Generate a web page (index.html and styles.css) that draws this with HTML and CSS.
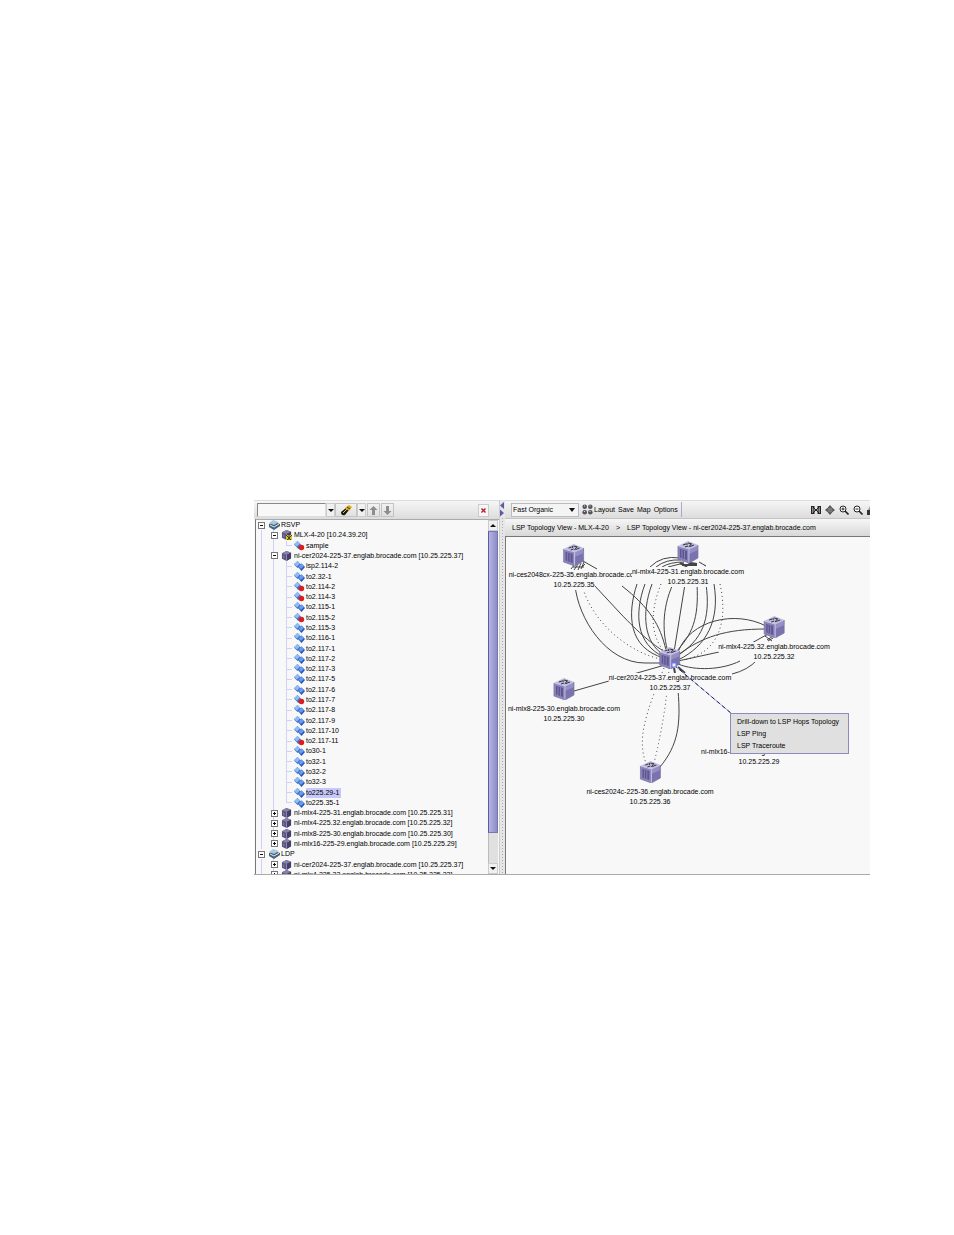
FILE: index.html
```html
<!DOCTYPE html>
<html lang="en">
<head>
    <meta charset="utf-8">
    <title>LSP Topology View</title>
    <link rel="stylesheet" href="styles.css">
</head>
<body>
    <svg class="defs" aria-hidden="true">
        <symbol id="router" viewBox="0 0 22 22">
            <path d="M1 5 L11 0 L21 4 L12 8 Z" fill="#bfbcdc"/>
            <path d="M1 5 L12 8 L12 22 L1 18 Z" fill="#8a84bd"/>
            <path d="M12 8 L21 4 L21 17 L12 22 Z" fill="#7a73ae"/>
            <path d="M12 8 L21 4 L21 9 L12 13 Z" fill="#958fc6"/>
            <path d="M1 5 L12 8 L21 4 M12 8 V22" fill="none" stroke="#cfccec" stroke-width=".8"/>
            <path d="M1 5 V18 L12 22 L21 17 V4" fill="none" stroke="#77719f" stroke-width=".7"/>
            <path d="M3 8 L10 10 V19 L3 16.500 Z" fill="#5d568f"/>
            <path d="M5 9 V17 M7.500 9.500 V18" stroke="#8f89c0" stroke-width=".8"/>
            <path d="M6 4 L9 3 M11 2 L15 3 M8 6 L11 5 M13 5.500 L17 4 M10 2 V4 M14 3 L12 6" stroke="#35323f"/>
        </symbol>
        <symbol id="box" viewBox="0 0 12 11">
            <path d="M1 2.5 L6 0 L11 2 L11 8 L6 11 L1 8.5 Z" fill="#5b5480"/>
            <path d="M1 2.5 L6 0 L11 2 L6 4.5 Z" fill="#8780a8"/>
            <path d="M6 4.5 L11 2 V8 L6 11 Z" fill="#453e68"/>
            <path d="M6 4.5 V11" stroke="#b3aecf" stroke-width=".7"/>
            <path d="M3 5 V8" stroke="#8f88b4"/>
        </symbol>
        <symbol id="stack" viewBox="0 0 11 10">
            <path d="M0 4 L6 2 L11 4 V6 L5 10 L0 7 Z" fill="#46617a"/>
            <path d="M0 3 L4 0 L10 2 L5 5 Z" fill="#a9c8de"/>
            <path d="M1 5 L5 7 L10 4" fill="none" stroke="#dcebf5"/>
        </symbol>
        <symbol id="link" viewBox="0 0 11 10">
            <path d="M0 3.500 L3.500 0 L7 3.500 L3.500 7 Z" fill="#3f70c8"/>
            <path d="M0 3 L3.500 0 L6 2.500 L3 5.500 Z" fill="#8fbcf2"/>
            <path d="M4 6 L7.500 2.500 L11 6 L7.500 10 Z" fill="#2453bb"/>
            <path d="M4.500 5.500 L7.500 2.500 L10 5 L7 8 Z" fill="#6a9ceb"/>
        </symbol>
        <symbol id="link-down" viewBox="0 0 11 10">
            <path d="M0 3.500 L3.500 0 L7 3.500 L3.500 7 Z" fill="#3f70c8"/>
            <path d="M0 3 L3.500 0 L6 2.500 L3 5.500 Z" fill="#8fbcf2"/>
            <path d="M3 7 L5 5 L7 9 Z" fill="#2f62c8"/>
            <circle cx="7.500" cy="6.500" r="2.700" fill="#dd1c1c"/>
        </symbol>
    </svg>

    <main class="viewer">
        <section class="sidebar">
            <div class="toolbar">
                <input class="search" type="text" aria-label="Search">
                <button class="arrow" aria-label="Search history"></button>
                <button class="find" aria-label="Find">
                    <svg width="12" height="11" viewBox="0 0 12 11"><path d="M1 7 L6 3 L9 5 L5 10 Q1 11 1 7" fill="#1d1a12"/><path d="M5 3 L9 0 L12 2 L9 6 Z" fill="#d6a91c"/><path d="M3 8 L7 4" stroke="#e6c23c"/><path d="M7 2 L10 4" stroke="#3d3410"/></svg>
                </button>
                <button class="arrow" aria-label="Find options"></button>
                <button class="step" aria-label="Previous">
                    <svg width="9" height="9" viewBox="0 0 9 9"><path d="M4.5 0 L8.5 4 H6 V9 H3 V4 H.5 Z" fill="#8d8d8d"/></svg>
                </button>
                <button class="step" aria-label="Next">
                    <svg width="9" height="9" viewBox="0 0 9 9"><path d="M4.5 9 L8.5 5 H6 V0 H3 V5 H.5 Z" fill="#8d8d8d"/></svg>
                </button>
                <button class="close" aria-label="Close">
                    <svg width="5" height="5" viewBox="0 0 5 5"><path d="M.5 .5 L4.5 4.5 M4.5 .5 L.5 4.5" stroke="#b3202c" stroke-width="1.4"/></svg>
                </button>
            </div>
            <div class="tree-pane">
                <ul class="tree">
                    <li class="root"><button class="toggle open" aria-label="Collapse"></button><svg class="icon"><use href="#stack"/></svg><span>RSVP</span></li>
                    <li class="device"><button class="toggle open" aria-label="Collapse"></button><svg class="icon"><use href="#box"/><path d="M5 5 H11 V11 H5 Z" fill="#d8c81e"/><path d="M5 5 L11 11 M11 5 L5 11 M8 5 V11" stroke="#4a4312"/></svg><span>MLX-4-20 [10.24.39.20]</span></li>
                    <li class="path last"><svg class="icon"><use href="#link-down"/></svg><span>sample</span></li>
                    <li class="device"><button class="toggle open" aria-label="Collapse"></button><svg class="icon"><use href="#box"/></svg><span>ni-cer2024-225-37.englab.brocade.com [10.25.225.37]</span></li>
                    <li class="path"><svg class="icon"><use href="#link"/></svg><span>lsp2.114-2</span></li>
                    <li class="path"><svg class="icon"><use href="#link"/></svg><span>to2.32-1</span></li>
                    <li class="path"><svg class="icon"><use href="#link-down"/></svg><span>to2.114-2</span></li>
                    <li class="path"><svg class="icon"><use href="#link-down"/></svg><span>to2.114-3</span></li>
                    <li class="path"><svg class="icon"><use href="#link"/></svg><span>to2.115-1</span></li>
                    <li class="path"><svg class="icon"><use href="#link-down"/></svg><span>to2.115-2</span></li>
                    <li class="path"><svg class="icon"><use href="#link"/></svg><span>to2.115-3</span></li>
                    <li class="path"><svg class="icon"><use href="#link"/></svg><span>to2.116-1</span></li>
                    <li class="path"><svg class="icon"><use href="#link"/></svg><span>to2.117-1</span></li>
                    <li class="path"><svg class="icon"><use href="#link"/></svg><span>to2.117-2</span></li>
                    <li class="path"><svg class="icon"><use href="#link"/></svg><span>to2.117-3</span></li>
                    <li class="path"><svg class="icon"><use href="#link"/></svg><span>to2.117-5</span></li>
                    <li class="path"><svg class="icon"><use href="#link"/></svg><span>to2.117-6</span></li>
                    <li class="path"><svg class="icon"><use href="#link-down"/></svg><span>to2.117-7</span></li>
                    <li class="path"><svg class="icon"><use href="#link"/></svg><span>to2.117-8</span></li>
                    <li class="path"><svg class="icon"><use href="#link"/></svg><span>to2.117-9</span></li>
                    <li class="path"><svg class="icon"><use href="#link"/></svg><span>to2.117-10</span></li>
                    <li class="path"><svg class="icon"><use href="#link-down"/></svg><span>to2.117-11</span></li>
                    <li class="path"><svg class="icon"><use href="#link"/></svg><span>to30-1</span></li>
                    <li class="path"><svg class="icon"><use href="#link"/></svg><span>to32-1</span></li>
                    <li class="path"><svg class="icon"><use href="#link"/></svg><span>to32-2</span></li>
                    <li class="path"><svg class="icon"><use href="#link"/></svg><span>to32-3</span></li>
                    <li class="path"><svg class="icon"><use href="#link"/></svg><span class="selected">to225.29-1</span></li>
                    <li class="path last"><svg class="icon"><use href="#link"/></svg><span>to225.35-1</span></li>
                    <li class="device"><button class="toggle" aria-label="Expand"></button><svg class="icon"><use href="#box"/></svg><span>ni-mlx4-225-31.englab.brocade.com [10.25.225.31]</span></li>
                    <li class="device"><button class="toggle" aria-label="Expand"></button><svg class="icon"><use href="#box"/></svg><span>ni-mlx4-225.32.englab.brocade.com [10.25.225.32]</span></li>
                    <li class="device"><button class="toggle" aria-label="Expand"></button><svg class="icon"><use href="#box"/></svg><span>ni-mlx8-225-30.englab.brocade.com [10.25.225.30]</span></li>
                    <li class="device last"><button class="toggle" aria-label="Expand"></button><svg class="icon"><use href="#box"/></svg><span>ni-mlx16-225-29.englab.brocade.com [10.25.225.29]</span></li>
                    <li class="root"><button class="toggle open" aria-label="Collapse"></button><svg class="icon"><use href="#stack"/></svg><span>LDP</span></li>
                    <li class="device"><button class="toggle" aria-label="Expand"></button><svg class="icon"><use href="#box"/></svg><span>ni-cer2024-225-37.englab.brocade.com [10.25.225.37]</span></li>
                    <li class="device"><button class="toggle" aria-label="Expand"></button><svg class="icon"><use href="#box"/></svg><span>ni-mlx4-225.32.englab.brocade.com [10.25.225.32]</span></li>
                </ul>
                <div class="scrollbar">
                    <button class="arrow up" aria-label="Scroll up"></button>
                    <div class="thumb"></div>
                    <div class="track"></div>
                    <button class="arrow" aria-label="Scroll down"></button>
                </div>
            </div>
        </section>

        <div class="splitter">
            <svg width="5" height="18" viewBox="0 0 5 18"><path d="M4 2 V9 L0 5.500 Z M0 9.500 V16.500 L4 13 Z" fill="#5a5aa8"/></svg>
        </div>

        <section class="topology">
            <div class="toolbar map-tools">
                <span class="combo">
                    <select aria-label="Layout type">
                        <option>Fast Organic</option>
                    </select>
                </span>
                <button class="text-button">
                    <svg width="11" height="11" viewBox="0 0 11 11"><g fill="#55555c"><circle cx="2.7" cy="2.7" r="2.3"/><circle cx="8.3" cy="2.7" r="2.3"/><circle cx="2.7" cy="8.3" r="2.3"/><circle cx="8.3" cy="8.3" r="2.3"/></g><path d="M2 2 H3 M7.500 2 H8.500 M2 7.500 H3 M7.500 7.500 H8.500" stroke="#d8d8dc"/></svg>Layout</button>
                <button class="text-button">Save</button>
                <button class="text-button">Map</button>
                <button class="text-button">Options</button>
                <span class="divider"></span>
                <div class="zoom-tools">
                    <button aria-label="Fit in view"><svg width="10" height="10" viewBox="0 0 10 10"><path d="M0 1 H3 V9 H0 Z M7 1 H10 V9 H7 Z" fill="#888"/><path d="M.5 1 V9 M9.500 1 V9 M3 1 V9 M7 1 V9 M0 1.500 H3 M7 1.500 H10 M0 8.500 H3 M7 8.500 H10 M2 2 L8 8 M8 2 L2 8" fill="none" stroke="#222"/></svg></button>
                    <button aria-label="Pan"><svg width="10" height="10" viewBox="0 0 10 10"><path d="M5 0 L7.500 3 H2.500 Z M5 10 L2.500 7 H7.500 Z M0 5 L3 2.500 V7.500 Z M10 5 L7 7.500 V2.500 Z" fill="#555"/><circle cx="5" cy="5" r="2.500" fill="#777"/></svg></button>
                    <button aria-label="Zoom in"><svg width="10" height="10" viewBox="0 0 10 10"><circle cx="4" cy="4" r="3" fill="#fff" stroke="#222"/><path d="M2.500 4 H5.500 M4 2.500 V5.500" stroke="#222"/><path d="M6 6 L9.500 9.500" stroke="#222" stroke-width="1.600"/></svg></button>
                    <button aria-label="Zoom out"><svg width="10" height="10" viewBox="0 0 10 10"><circle cx="4" cy="4" r="3" fill="#fff" stroke="#222"/><path d="M2.500 4 H5.500" stroke="#222"/><path d="M6 6 L9.500 9.500" stroke="#222" stroke-width="1.600"/></svg></button>
                    <button class="cut" aria-label="Export"><svg width="10" height="10" viewBox="0 0 10 10"><path d="M0 5 H10 V10 H0 Z" fill="#333"/><path d="M1 5 L3 1 H9 V5" fill="#999"/></svg></button>
                </div>
            </div>
            <nav class="crumbs">
                <a href="#">LSP Topology View - MLX-4-20</a>
                <span>&gt;</span>
                <a href="#">LSP Topology View - ni-cer2024-225-37.englab.brocade.com</a>
            </nav>
            <div class="map">
                <svg class="links" width="364" height="337" viewBox="506 537 364 337">
                    <g class="solid">
                        <!-- ces2048cx-225-35 -->
                        <path d="M575 585 C578 618 606 663 645 663 H664"/>
                        <path d="M594 585 L620 613 C640 634 652 644 665 652"/>
                        <path d="M583 561 L597 569 M622 586 C650 608 660 625 666 650"/>
                        <path d="M571 569 L575 564 M574 570 L578 564 M578 570 L581 563 M581 569 L584 562 M573 567 H584 M585 564 L582 567"/>
                        <!-- mlx4-225-31 -->
                        <path d="M637 584 C627 614 628 648 664 658"/>
                        <path d="M645 584 C634 614 636 644 664 657"/>
                        <path d="M652 584 C641 614 644 643 664 655"/>
                        <path d="M673 584 C661 610 663 635 668 652"/>
                        <path d="M685 584 L674 652"/>
                        <path d="M697 584 C699 620 692 634 676 652"/>
                        <path d="M706 584 C711 620 702 640 677 656"/>
                        <path d="M714 584 C720 620 707 646 678 660"/>
                        <path d="M650 567 Q662 555 680 558 M656 567 Q666 559 681 560 M662 567 Q670 562 684 562 M668 567 L684 563 M699 562 L706 566"/>
                        <path class="heavy" d="M680 563 L686 566 L691 563 L697 564 M682 565 H697"/>
                        <!-- mlx4-225.32 -->
                        <path d="M678 652 C690 620 735 610 766 626"/>
                        <path d="M678 655 C702 637 725 629 766 629"/>
                        <path d="M678 661 L719 652 M750 644 L768 634"/>
                        <path d="M678 664 C695 671 722 670 740 661"/>
                        <path d="M732 674 Q748 670 757 660"/>
                        <path d="M765 636 L772 641 M767 640 L773 636 M768 641 L773 638"/>
                        <!-- mlx8-225-30 and ces2024c-225-36 -->
                        <path d="M574 691 L665 665"/>
                        <path d="M678 690 C681 725 678 745 660 767"/>
                        <path class="heavy" d="M674 668 L675 673 M678 667 L685 673"/>
                    </g>
                    <g class="dotted">
                        <path d="M582 585 C592 623 630 654 665 660"/>
                        <path d="M661 584 C650 612 650 635 665 653"/>
                        <path d="M720 584 C728 620 720 652 684 660"/>
                        <path d="M664 668 C645 715 637 740 646 763"/>
                        <path d="M669 668 Q666 715 654 763"/>
                        <path d="M701 563 L707 567"/>
                    </g>
                </svg>

                <div class="node ces-35"><svg class="router"><use href="#router"/></svg><span>ni-ces2048cx-225-35.englab.brocade.com</span><span>10.25.225.35</span></div>
                <div class="node mlx-31"><svg class="router"><use href="#router"/></svg><span>ni-mlx4-225-31.englab.brocade.com</span><span>10.25.225.31</span></div>
                <div class="node mlx-32"><svg class="router"><use href="#router"/></svg><span>ni-mlx4-225.32.englab.brocade.com</span><span>10.25.225.32</span></div>
                <div class="node cer-37"><svg class="router"><use href="#router"/></svg><span>ni-cer2024-225-37.englab.brocade.com</span><span>10.25.225.37</span></div>
                <div class="node mlx-30"><svg class="router"><use href="#router"/></svg><span>ni-mlx8-225-30.englab.brocade.com</span><span>10.25.225.30</span></div>
                <div class="node ces-36"><svg class="router"><use href="#router"/></svg><span>ni-ces2024c-225-36.englab.brocade.com</span><span>10.25.225.36</span></div>
                <div class="node mlx-29"><svg class="router"><use href="#router"/></svg><span>ni-mlx16-225-29.englab.brocade.com</span><span>10.25.225.29</span></div>

                <svg class="links" width="364" height="337" viewBox="506 537 364 337">
                    <path d="M674 665 L732 714" stroke="#9c9cf0"/>
                    <path d="M674 665 L732 714" stroke="#222244" stroke-dasharray="4 3"/>
                    <path d="M672 663 H676 V667 H672 Z" fill="#eef" stroke="#6a7cf0"/>
                </svg>

                <div class="menu">
                    <button>Drill-down to LSP Hops Topology</button>
                    <button>LSP Ping</button>
                    <button>LSP Traceroute</button>
                </div>
            </div>
        </section>
    </main>
</body>
</html>
```
FILE: styles.css
```css
* {
    box-sizing: border-box;
}

body {
    margin: 0;
    padding: 500px 84px 360px 254px;
    background-color: #fff;
    color: #000;
    font-family: "Liberation Sans", Arial, sans-serif;
    font-size: 7px;
    line-height: 10px;
}

button, input, select {
    margin: 0;
    padding: 0;
    border: none;
    border-radius: 0;
    background: none;
    color: inherit;
    font: inherit;
}

a {
    color: inherit;
    text-decoration: none;
}

svg {
    display: block;
    flex: none;
}

.defs {
    position: absolute;
    width: 0;
    height: 0;
}

.viewer {
    display: grid;
    grid-template-columns: 245px 6px minmax(0, 1fr);
    border-bottom: 1px solid #aaa;
    background-color: #f8f8f8;
}

.toolbar {
    display: flex;
    align-items: center;
    height: 19px;
    padding: 2px 10px 2px 3px;
    border-top: 1px solid #ddd;
    background: linear-gradient(#f6f6f6, #dcdcdc);
}

/* sidebar */
.sidebar {
    display: flex;
    flex-direction: column;
    min-width: 0;
}

.search {
    width: 69px;
    height: 14px;
    border: 1px solid #888;
    border-right-color: #ddd;
    border-bottom-color: #ddd;
    background-color: #f8f8f8;
}

.arrow {
    display: flex;
    align-items: center;
    justify-content: center;
    width: 9px;
    height: 14px;
    border: 1px solid #ccc;
    background-color: #f0f0f0;
}

.arrow::after {
    content: "";
    border: 3px solid transparent;
    border-top-color: #111;
    border-bottom: none;
}

.arrow.up::after {
    border-top: none;
    border-bottom: 3px solid #111;
}

.find, .step {
    display: flex;
    align-items: center;
    justify-content: center;
    height: 14px;
    border: 1px solid #c4c4c4;
}

.find {
    width: 22px;
}

.step {
    width: 13px;
    margin-left: 1px;
}

.close {
    display: flex;
    align-items: center;
    justify-content: center;
    width: 11px;
    height: 13px;
    margin-left: auto;
    border: 1px solid #ccc;
    background-color: #f6f6f6;
}

.tree-pane {
    display: flex;
    height: 355px;
    margin-left: 1px;
    border-left: 1px solid #777;
    border-top: 1px solid #aaa;
    overflow: hidden;
}

.tree {
    --line: linear-gradient(#d0d0f8, #d0d0f8);
    display: grid;
    grid-auto-rows: 1fr;
    flex: 1;
    height: 360px;
    min-width: 0;
    margin: 0;
    padding: 0;
    list-style: none;
    white-space: nowrap;
}

.tree li {
    display: flex;
    align-items: center;
    gap: 1px;
    min-height: 0;
    background-repeat: no-repeat;
}

.root {
    padding-left: 2px;
}

.device {
    padding-left: 15px;
    background-image: var(--line), var(--line);
    background-position: 5px 0, 17px 0;
    background-size: 1px 100%;
}

.device.last {
    background-size: 1px 100%, 1px 50%;
}

.path {
    padding-left: 38px;
    background-image: var(--line), var(--line), var(--line), var(--line);
    background-position: 5px 0, 17px 0, 30px 0, 31px 50%;
    background-size: 1px 100%, 1px 100%, 1px 100%, 5px 1px;
}

.path.last {
    background-size: 1px 100%, 1px 100%, 1px 50%, 5px 1px;
}

.toggle {
    flex: none;
    width: 7px;
    height: 7px;
    margin-right: 2px;
    border: 1px solid #777;
    background:
        linear-gradient(#111, #111) center / 3px 1px no-repeat,
        linear-gradient(#111, #111) center / 1px 3px no-repeat,
        #fff;
}

.toggle.open {
    background: linear-gradient(#111, #111) center / 3px 1px no-repeat, #fff;
}

.icon {
    width: 11px;
    height: 10px;
}

.device .icon {
    margin-right: 1px;
}

.root .icon {
    margin-left: 1px;
}

.selected {
    padding-right: 2px;
    background-color: #c8c8f8;
}

.scrollbar {
    display: flex;
    flex-direction: column;
    width: 10px;
    margin-right: 1px;
    background-color: #e0e0e0;
}

.scrollbar .arrow {
    width: 10px;
    height: 11px;
}

.thumb {
    flex: 302;
    border: 1px solid #7676b4;
    border-left-color: #5c5ca0;
    background: linear-gradient(90deg, #b4b4e4, #8c8cc4);
}

.track {
    flex: 30;
    border-left: 1px solid #bbb;
}

/* splitter */
.splitter {
    border-left: 1px solid #ccc;
    background: linear-gradient(#aaa 0 1px, transparent 1px) center 0 / 1px 3px repeat-y #e6e6e6;
}

.splitter svg {
    background-color: #e6e6e6;
}

/* topology */
.topology {
    display: flex;
    flex-direction: column;
    min-width: 0;
}

.map-tools {
    height: 18px;
    padding: 1px 0 1px 6px;
    gap: 3px;
}

.combo {
    position: relative;
}

.combo select {
    display: block;
    width: 68px;
    height: 14px;
    padding-left: 1px;
    border: 1px solid #bbb;
    appearance: none;
    background-color: #f4f4f4;
}

.combo::after {
    content: "";
    position: absolute;
    top: 5px;
    right: 4px;
    border: 3px solid transparent;
    border-top: 4px solid #111;
    border-bottom: none;
    pointer-events: none;
}

.text-button {
    display: flex;
    align-items: center;
    gap: 1px;
}

.divider {
    align-self: stretch;
    border-left: 1px solid #a8a8d8;
}

.zoom-tools {
    display: flex;
    gap: 4px;
    margin-left: auto;
}

.zoom-tools .cut {
    width: 3px;
    overflow: hidden;
}

.crumbs {
    display: flex;
    align-items: center;
    gap: 7px;
    height: 18px;
    padding-left: 7px;
    border-top: 1px solid #c4c4c4;
    background: linear-gradient(#f6f6f6, #d8d8d8);
    white-space: nowrap;
}

.map {
    position: relative;
    flex: 1;
    border-top: 1px solid #777;
    border-left: 1px solid #777;
    overflow: hidden;
}

.links {
    position: absolute;
    top: 0;
    left: 0;
    fill: none;
    pointer-events: none;
}

.solid {
    stroke: #444;
}

.heavy {
    stroke-width: 2;
}

.dotted {
    stroke: #444;
    stroke-dasharray: 1 3;
}

.node {
    position: absolute;
    display: flex;
    flex-direction: column;
    align-items: center;
    transform: translateX(-50%);
    white-space: nowrap;
}

.node span {
    background-color: #f8f8f8;
}

.router {
    width: 22px;
    height: 22px;
    margin-bottom: 4px;
}

.ces-35 { left: 68px; top: 7px; }
.mlx-31 { left: 182px; top: 4px; }
.mlx-32 { left: 268px; top: 79px; }
.cer-37 { left: 164px; top: 110px; }
.mlx-30 { left: 58px; top: 141px; }
.ces-36 { left: 144px; top: 224px; }
.mlx-29 { left: 253px; top: 184px; }

.menu {
    position: absolute;
    left: 224px;
    top: 176px;
    display: flex;
    flex-direction: column;
    width: 119px;
    padding: 2px 0 1px;
    border: 1px solid #8c8cbc;
    background-color: #e0e0e0;
}

.menu button {
    height: 12px;
    padding-left: 6px;
    text-align: left;
}
```
